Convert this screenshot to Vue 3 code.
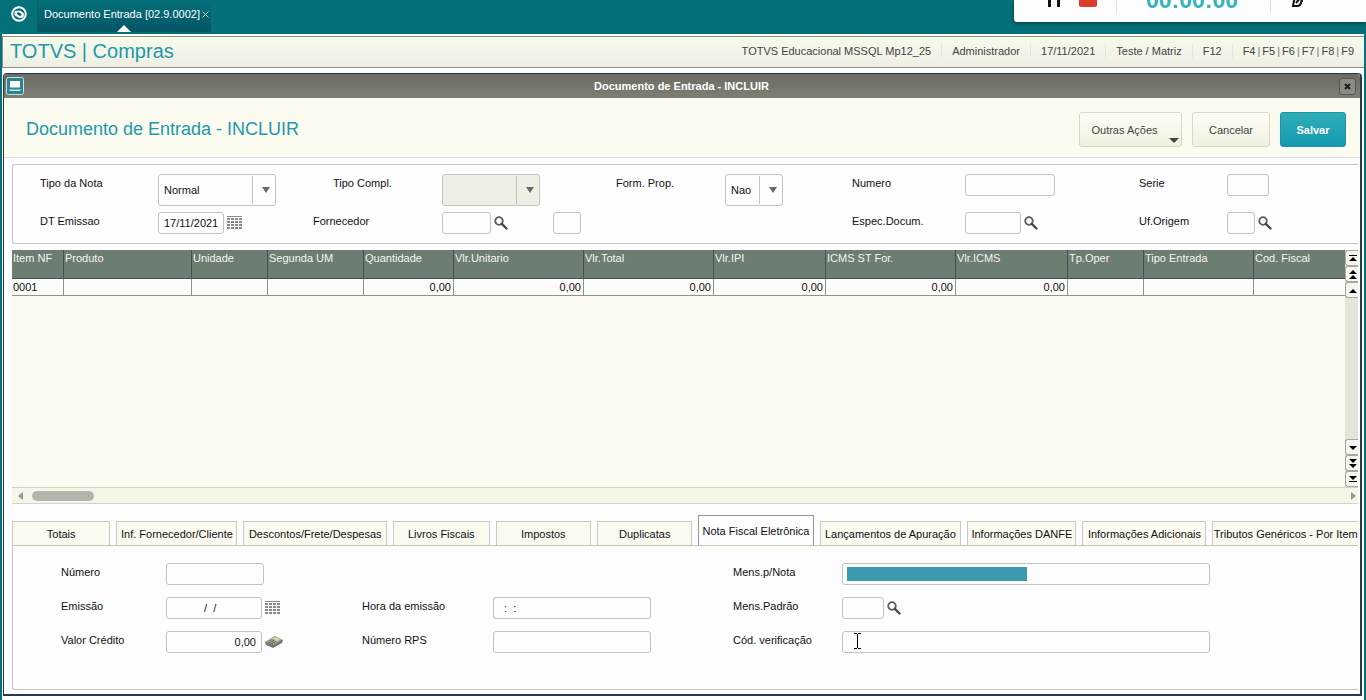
<script setup>
import { ref } from 'vue'

const info = ['TOTVS Educacional MSSQL Mp12_25', 'Administrador', '17/11/2021', 'Teste / Matriz', 'F12']
const keys = ['F4', 'F5', 'F6', 'F7', 'F8', 'F9']

const columns = [
  { name: 'Item NF', width: 52, value: '0001' },
  { name: 'Produto', width: 128, value: '' },
  { name: 'Unidade', width: 76, value: '' },
  { name: 'Segunda UM', width: 96, value: '' },
  { name: 'Quantidade', width: 90, value: '0,00', num: true },
  { name: 'Vlr.Unitario', width: 130, value: '0,00', num: true },
  { name: 'Vlr.Total', width: 130, value: '0,00', num: true },
  { name: 'Vlr.IPI', width: 112, value: '0,00', num: true },
  { name: 'ICMS ST For.', width: 130, value: '0,00', num: true },
  { name: 'Vlr.ICMS', width: 112, value: '0,00', num: true },
  { name: 'Tp.Oper', width: 76, value: '' },
  { name: 'Tipo Entrada', width: 110, value: '' },
  { name: 'Cod. Fiscal', width: 91, value: '' }
]

const tabs = [
  { name: 'Totais', width: 98 },
  { name: 'Inf. Fornecedor/Cliente', width: 121 },
  { name: 'Descontos/Frete/Despesas', width: 144 },
  { name: 'Livros Fiscais', width: 96 },
  { name: 'Impostos', width: 95 },
  { name: 'Duplicatas', width: 95 },
  { name: 'Nota Fiscal Eletrônica', width: 115 },
  { name: 'Lançamentos de Apuração', width: 142 },
  { name: 'Informações DANFE', width: 109 },
  { name: 'Informações Adicionais', width: 124 },
  { name: 'Tributos Genéricos - Por Item', width: 147 }
]
const activeTab = ref(6)

const upButtons = [
  { label: 'Primeira linha', d: 'M3 4h8v1H3zM3 10l4-4 4 4z' },
  { label: 'Página anterior', d: 'M3 7l4-4 4 4zM3 12l4-4 4 4z' },
  { label: 'Linha anterior', d: 'M3 10l4-4 4 4z' }
]
const downButtons = [
  { label: 'Próxima linha', d: 'M3 6h8l-4 4z' },
  { label: 'Próxima página', d: 'M3 3h8l-4 4zM3 8h8l-4 4z' },
  { label: 'Última linha', d: 'M3 4h8l-4 4zM3 9h8v1H3z' }
]
</script>

<template>
  <div class="app">
    <svg class="symbols" aria-hidden="true">
      <symbol id="lens" viewBox="0 0 14 14">
        <circle cx="5" cy="5" r="3.8" fill="none" stroke="#5c5c5c" stroke-width="1.8" />
        <path d="M7.8 7.8l4.700 4.700" stroke="#4a4a4a" stroke-width="2.4" stroke-linecap="round" />
      </symbol>
      <symbol id="calendar" viewBox="0 0 16 14">
        <path d="M0 .5h15" stroke="#8a8a84" />
        <path d="M0 3h3M4 3h3M8 3h3M12 3h3M0 6h3M4 6h3M8 6h3M12 6h3M0 9h3M4 9h3M8 9h3M12 9h3M0 12h3M4 12h3M8 12h3M12 12h3" stroke="#8a8a84" stroke-width="2" />
      </symbol>
      <symbol id="arrow" viewBox="0 0 8 6">
        <path d="M0 0h8L4 6z" fill="#6b6b66" />
      </symbol>
    </svg>

    <header class="topbar">
      <button class="logo" aria-label="Menu">
        <svg width="16" height="16" viewBox="0 0 16 16">
          <circle cx="8" cy="8" r="6.8" fill="none" stroke="#fff" stroke-width="2" />
          <path d="M4 5.500L9 5l3.500 2.500L12 11l-4 .5L4 9z" fill="#fff" stroke="#fff" stroke-linejoin="round" />
          <ellipse cx="8.200" cy="8" rx="2.500" ry="1.300" transform="rotate(28 8.200 8)" fill="#04606c" />
        </svg>
      </button>
      <div class="doc-tab">
        <span>Documento Entrada [02.9.0002]</span>
        <button aria-label="Fechar aba">
          <svg width="7" height="7" viewBox="0 0 7 7"><path d="M.5.5l6 6M6.500.5l-6 6" stroke="#b5d2d4" /></svg>
        </button>
        <i class="notch"></i>
      </div>
    </header>

    <div class="recorder">
      <button class="pause" aria-label="Pausar"></button>
      <button class="stop" aria-label="Parar"></button>
      <i class="bar"></i>
      <span class="time">00:00:00</span>
      <i class="bar"></i>
      <button class="pen" aria-label="Desenhar">
        <svg width="14" height="14" viewBox="0 0 14 14"><path d="M4 3L2 13h4c3 0 4-2 4.500-5H12" fill="none" stroke="#111" stroke-width="2" /><path d="M5 10l5-6" stroke="#111" stroke-width="2" /></svg>
      </button>
    </div>

    <div class="workspace">
      <div class="module">
        <h1>TOTVS | Compras</h1>
        <div class="info">
          <span v-for="i in info" :key="i">{{ i }}</span>
          <span class="keys"><template v-for="(k, n) in keys" :key="k"><i v-if="n">|</i><b>{{ k }}</b></template></span>
        </div>
      </div>

      <main class="window">
        <div class="titlebar">
          <svg width="18" height="18" viewBox="0 0 18 18">
            <rect x=".5" y=".5" width="17" height="17" rx="2" fill="#2a8590" stroke="#c5e2e2" />
            <path d="M4 4h10v6.500H4z" fill="#fff" /><path d="M3 12.500h12l-1 1.500H4z" fill="#d2e8e8" />
          </svg>
          <strong>Documento de Entrada - INCLUIR</strong>
          <button aria-label="Fechar">
            <svg width="7" height="7" viewBox="0 0 7 7"><path d="M1 1l5 5M6 1L1 6" stroke="#1d1d1d" stroke-width="2" /></svg>
          </button>
        </div>

        <div class="heading">
          <h2>Documento de Entrada - INCLUIR</h2>
          <button class="btn more">Outras Ações<i></i></button>
          <button class="btn cancel">Cancelar</button>
          <button class="btn save">Salvar</button>
        </div>

        <div class="body">
          <form class="fields" @submit.prevent>
            <label for="tipo">Tipo da Nota</label>
            <div class="combo w118">
              <select id="tipo"><option>Normal</option></select>
              <span><svg width="8" height="6"><use href="#arrow" /></svg></span>
            </div>
            <label class="indent" for="compl">Tipo Compl.</label>
            <div class="combo w98 off">
              <select id="compl" disabled><option></option></select>
              <span><svg width="8" height="6"><use href="#arrow" /></svg></span>
            </div>
            <label for="form">Form. Prop.</label>
            <div class="combo w58">
              <select id="form"><option>Nao</option></select>
              <span><svg width="8" height="6"><use href="#arrow" /></svg></span>
            </div>
            <label for="numero">Numero</label>
            <div><input id="numero" class="w90"></div>
            <label for="serie">Serie</label>
            <div><input id="serie" class="w42"></div>

            <label for="dt">DT Emissao</label>
            <div class="ctl">
              <input id="dt" class="w66" value="17/11/2021">
              <button aria-label="Calendário"><svg width="16" height="14"><use href="#calendar" /></svg></button>
            </div>
            <label for="forn">Fornecedor</label>
            <div class="ctl">
              <input id="forn" class="w49">
              <button aria-label="Pesquisar fornecedor"><svg width="14" height="14"><use href="#lens" /></svg></button>
              <input class="w28 loja" aria-label="Loja">
            </div>
            <span></span><span></span>
            <label for="espec">Espec.Docum.</label>
            <div class="ctl">
              <input id="espec" class="w56">
              <button aria-label="Pesquisar espécie"><svg width="14" height="14"><use href="#lens" /></svg></button>
            </div>
            <label for="uf">Uf.Origem</label>
            <div class="ctl">
              <input id="uf" class="w28">
              <button aria-label="Pesquisar UF"><svg width="14" height="14"><use href="#lens" /></svg></button>
            </div>
          </form>

          <section class="grid">
            <div class="rows">
              <table>
                <colgroup><col v-for="c in columns" :key="c.name" :style="{ width: (c.width / 13.33) + '%' }"></colgroup>
                <thead><tr><th v-for="c in columns" :key="c.name">{{ c.name }}</th></tr></thead>
                <tbody><tr><td v-for="c in columns" :key="c.name" :class="{ num: c.num }">{{ c.value }}</td></tr></tbody>
              </table>
            </div>
            <div class="vscroll">
              <button v-for="b in upButtons" :key="b.label" :aria-label="b.label"><svg width="14" height="14" viewBox="0 0 14 14"><path :d="b.d" /></svg></button>
              <i></i>
              <button v-for="b in downButtons" :key="b.label" :aria-label="b.label"><svg width="14" height="14" viewBox="0 0 14 14"><path :d="b.d" /></svg></button>
            </div>
            <div class="hscroll">
              <button aria-label="Rolar à esquerda"><svg width="5" height="8"><path d="M5 0v8L0 4z" fill="#96968e" /></svg></button>
              <i></i>
              <button aria-label="Rolar à direita"><svg width="5" height="8"><path d="M0 0v8l5-4z" fill="#96968e" /></svg></button>
            </div>
          </section>

          <nav class="tabs" role="tablist">
            <button
              v-for="(t, n) in tabs" :key="t.name" role="tab" :aria-selected="n === activeTab"
              :class="{ on: n === activeTab }" :style="{ flexGrow: t.width }" @click="activeTab = n"
            >{{ t.name }}</button>
          </nav>

          <form class="nfe" @submit.prevent>
            <label for="num">Número</label>
            <div><input id="num" class="w98"></div>
            <span></span><span></span>
            <label for="mens">Mens.p/Nota</label>
            <div><input id="mens" class="w368 selected"></div>

            <label for="emissao">Emissão</label>
            <div class="ctl">
              <input id="emissao" class="w96 mid" value="/  /">
              <button aria-label="Calendário de emissão"><svg width="16" height="14"><use href="#calendar" /></svg></button>
            </div>
            <label for="hora">Hora da emissão</label>
            <div><input id="hora" class="w158 time-in" value=":  :"></div>
            <label for="padrao">Mens.Padrão</label>
            <div class="ctl">
              <input id="padrao" class="w42">
              <button aria-label="Pesquisar mensagem"><svg width="14" height="14"><use href="#lens" /></svg></button>
            </div>

            <label for="valor">Valor Crédito</label>
            <div class="ctl">
              <input id="valor" class="w96 right" value="0,00">
              <button aria-label="Calculadora">
                <svg width="18" height="14" viewBox="0 0 18 14">
                  <path d="M0 7l10-6 8 4-1 3-9 5-7-3z" fill="#77776c" />
                  <path d="M1 6.500L10 1l7 3.500-9 5.500z" fill="#b5b5a5" />
                  <path d="M8 3.500l3-1.500 4 2-3 2z" fill="#d8d890" />
                  <path d="M3 6.500l5 2.500M5 5.500l5 2.500M6.500 4.500l5 2.500M8 9.500L4 7M10 8.500L4 5" stroke="#72726a" fill="none" />
                </svg>
              </button>
            </div>
            <label for="rps">Número RPS</label>
            <div><input id="rps" class="w158"></div>
            <label for="cod">Cód. verificação</label>
            <div class="cod">
              <input id="cod" class="w368">
              <svg class="cursor" width="7" height="16" viewBox="0 0 7 16"><path d="M0 .5h3M4 .5h3M3.500 1v14M0 15.500h3M4 15.500h3" stroke="#000" fill="none" /></svg>
            </div>
          </form>
        </div>
      </main>
    </div>
  </div>
</template>

<style>
body { margin: 0; }
</style>

<style scoped>
* { box-sizing: border-box; }
.app {
  position: relative; display: flex; flex-direction: column; min-height: 100vh;
  padding: 0 2px; overflow: hidden; background: #04707a; color: #111;
  font: 11px/14px "Liberation Sans", Arial, sans-serif;
}
.symbols { position: absolute; width: 0; height: 0; }
button, input, select { font: inherit; color: inherit; margin: 0; }
button { padding: 0; border: 0; background: none; }
svg { display: block; flex: none; }
h1, h2 { margin: 0; font-weight: 400; color: #1f98ab; }

.topbar { display: flex; height: 34px; }
.logo { width: 36px; padding: 0 0 6px 9px; border-right: 1px solid #0a5f70; }
.doc-tab {
  position: relative; display: flex; align-items: center; gap: 2px; height: 32px;
  padding: 0 2px 4px 6px; color: #fff; white-space: nowrap;
  background: linear-gradient(#04707a, #055566);
}
.notch {
  position: absolute; left: 79px; bottom: 0; width: 0; height: 0;
  border: 7px solid transparent; border-top: 0; border-bottom-color: #fff;
}

.recorder {
  position: absolute; z-index: 2; top: 0; right: 0; display: flex; align-items: flex-end;
  width: 352px; height: 22px; padding: 0 0 15px 34px; overflow: hidden;
  background: #fdfdff; border-radius: 0 0 0 3px; box-shadow: 0 1px 4px #023c46;
}
.pause { width: 12px; height: 14px; border: solid #111; border-width: 0 3px; }
.stop { width: 18px; height: 14px; margin: 0 19px; border-radius: 2px; background: #dc3c28; }
.recorder .bar { width: 1px; height: 22px; margin-bottom: -6px; background: #e0e0dc; }
.time { margin: 0 32px 0 29px; font-size: 23px; font-weight: 700; line-height: 14px; color: #35b3b6; }
.pen { margin-left: 20px; }

.workspace { display: flex; flex: 1; flex-direction: column; padding-bottom: 4px; background: #fff; }
.module {
  display: flex; align-items: center; height: 32px; margin: 2px 0 5px; padding: 0 10px 3px 7px;
  border: solid #8c8c86; border-width: 1px 0 1px 1px; background: linear-gradient(#f6fbea, #eeefe4);
}
h1 { flex: 1; font-size: 20px; line-height: 24px; }
.info { display: flex; color: #444; white-space: nowrap; }
.info span + span { margin-left: 10px; padding-left: 10px; border-left: 1px solid #e4e6df; }
.keys i { margin: 0 2px; font-style: normal; color: #777; }
.keys b { font-weight: 400; }

.window {
  display: flex; flex: 1; flex-direction: column; margin: 0 2px 0 1px;
  border: solid #1d3b52; border-width: 1px 2px 2px 1px; border-radius: 4px 4px 0 0; background: #fbfbf0;
}
.titlebar {
  display: flex; align-items: center; height: 24px; padding: 0 4px 0 2px;
  background: linear-gradient(#6c6c66, #7e7e74); color: #fff; border-radius: 3px 3px 0 0;
}
.titlebar strong { flex: 1; text-align: center; }
.titlebar button {
  display: grid; place-items: center; width: 17px; height: 17px;
  border: 1px solid #55554f; border-radius: 3px; background: #8c8c86;
}
.heading {
  display: flex; align-items: center; gap: 10px; height: 60px; padding: 4px 14px 0 22px;
  border-bottom: 1px solid #dcdce4;
}
h2 { flex: 1; padding-bottom: 2px; font-size: 18px; line-height: 22px; }
.btn {
  height: 35px; border: 1px solid #d8d8c8; border-radius: 3px;
  background: linear-gradient(#fdfdf8, #f1f1e0); color: #444;
}
.more { position: relative; width: 103px; padding-right: 12px; }
.more i {
  position: absolute; right: 2px; bottom: 3px; width: 0; height: 0;
  border: 5px solid transparent; border-bottom: 0; border-top-color: #444;
}
.cancel { width: 78px; }
.save { width: 66px; border-color: #1c94a6; background: linear-gradient(#30aeb8, #1499b0); color: #fff; font-weight: 700; }

.body { display: flex; flex: 1; flex-direction: column; padding: 6px 2px 4px 8px; background: #fdfdff; min-width: 0; }
.fields {
  display: grid; grid-template-rows: 38px 22px; height: 80px; padding: 9px 0 0 27px;
  grid-template-columns: 118fr 155fr 129fr 174fr 109fr 127fr 113fr 174fr 88fr 131fr;
  border: 1px solid #c6c6b4; border-right: 0; border-radius: 3px 0 0 3px;
}
.fields > *, .nfe > * { min-width: 0; }
label { line-height: 18px; white-space: nowrap; }
.indent { padding-left: 20px; }
input {
  display: block; height: 22px; padding: 0 5px; border: 1px solid #c4c4b8; border-radius: 3px;
  background: #fdfdff; outline: 0;
}
.w28 { width: 28px; } .w42 { width: 42px; } .w49 { width: 49px; } .w56 { width: 56px; }
.w58 { width: 58px; } .w66 { width: 66px; } .w90 { width: 90px; } .w96 { width: 96px; }
.w98 { width: 98px; } .w118 { width: 118px; } .w158 { width: 158px; } .w368 { width: 368px; }
.ctl { display: flex; align-items: center; gap: 3px; }
.loja { margin-left: 42px; }
.combo { display: grid; height: 32px; border: 1px solid #c4c4b8; border-radius: 3px; background: #fdfdff; }
.combo.off { background: #eeeee6; }
.combo select {
  grid-area: 1 / 1; width: 100%; padding: 0 24px 0 5px; appearance: none; border: 0;
  background: none; outline: 0; opacity: 1;
}
.combo span {
  display: grid; grid-area: 1 / 1; place-items: center; justify-self: end; width: 23px; margin: 1px 0;
  padding-left: 4px; border-left: 1px solid #c4c4b8; pointer-events: none;
}

.grid { display: grid; flex: 1; grid-template: 1fr 17px / 1fr 13px; margin-top: 6px; }
.rows { background: #fbfbf2; }
table { width: 100%; table-layout: fixed; border-collapse: separate; border-spacing: 0; }
th {
  height: 29px; padding: 1px 0 0 1px; border-right: 1px solid #45524c; border-bottom: 1px solid #45524c;
  background: #6c7d72; color: #f5f5f0; font-weight: 400; text-align: left; vertical-align: top;
}
th:last-child, td:last-child { border-right: 0; }
td {
  height: 17px; padding: 0 1px; border-right: 1px solid #92928c; border-bottom: 1px solid #92928c;
  line-height: 16px; background: #fcfcfa;
}
.num { padding-right: 2px; text-align: right; }
.vscroll { display: flex; flex-direction: column; background: #e4e4da; }
.vscroll button {
  height: 16px; border: solid #a8a8a0; border-width: 1px 0 1px 1px; border-radius: 3px 0 0 3px;
  background: #f6f6f0; overflow: hidden;
}
.vscroll i { flex: 1; }
.hscroll {
  display: flex; grid-column: 1 / 3; align-items: center; padding: 0 2px 0 6px;
  border: solid #d4d4c4; border-width: 1px 0; background: #f6f6e8;
}
.hscroll i { width: 62px; height: 10px; margin: 0 auto 0 9px; border-radius: 5px; background: #b4b4ae; }

.tabs { display: flex; align-items: flex-end; gap: 6px; margin-top: 11px; }
.tabs button {
  flex: 1 1 0; height: 24px; padding: 1px 0 0; border: 1px solid #cacabc;
  border-bottom: 0; background: #fafaf0; white-space: nowrap;
}
.tabs button:last-child { border-right: 0; }
.tabs .on { height: 30px; border-color: #97978f; background: #fdfdff; }
.nfe {
  display: grid; grid-template-rows: repeat(3, 22px); grid-template-columns: 105fr 196fr 131fr 240fr 109fr 516fr;
  row-gap: 12px; height: 145px; padding: 17px 0 0 48px;
  border: 1px solid #c6c6b4; border-right: 0; border-radius: 0 0 0 3px;
}
.mid { padding-left: 37px; white-space: pre; }
.time-in { padding-left: 10px; }
.right { text-align: right; }
.selected { background: linear-gradient(#3c9aae, #3c9aae) 4px 3px / 180px 14px no-repeat #fdfdff; }
.cod { position: relative; }
.cursor { position: absolute; left: 12px; top: 2px; }
</style>
